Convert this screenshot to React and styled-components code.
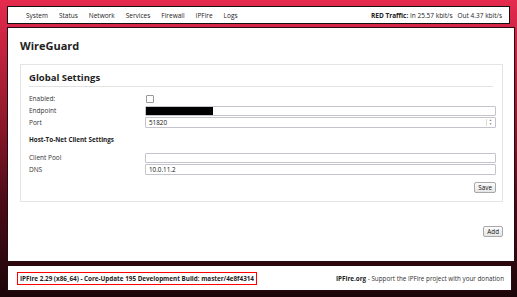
import styled, { createGlobalStyle } from 'styled-components';

const GlobalStyle = createGlobalStyle`
  html, body {
    margin: 0;
    padding: 0;
  }
  body {
    font-family: "Open Sans", "Liberation Sans", sans-serif;
    background: linear-gradient(180deg, #e52b4e 0%, #c92342 14%, #951a2d 38%, #4a0c17 68%, #1c0609 100%);
    min-height: 297px;
  }
`;

const Page = styled.div`
  box-sizing: border-box;
  height: 297px;
  padding: 6px 2px 6px 7px;
  display: flex;
  flex-direction: column;
  gap: 3px;
`;

const NavBar = styled.div`
  box-sizing: border-box;
  height: 18px;
  margin-right: 5px;
  background: #fff;
  border: 1px solid #111;
  display: flex;
  align-items: center;
  justify-content: space-between;
  padding: 0 7px 0 18px;
  font-size: 6.5px;
  color: #222;
`;

const NavLinks = styled.div`
  display: flex;
  gap: 11px;
`;

const Traffic = styled.div`
  display: flex;
  gap: 5px;
  b {
    font-weight: 700;
  }
`;

const Main = styled.div`
  box-sizing: border-box;
  flex: 1;
  background: #fff;
  border: 1px solid #2a0810;
  display: flex;
  flex-direction: column;
  padding: 0 11px 0 12px;
`;

const Heading = styled.h1`
  margin: 10px 0 0 0;
  font-size: 11px;
  line-height: 16px;
  font-weight: 700;
  color: #222;
`;

const Section = styled.div`
  box-sizing: border-box;
  margin-top: 10px;
  height: 138px;
  border: 1px solid #e4e4e4;
  padding: 0 6px 0 8px;
  display: flex;
  flex-direction: column;
`;

const SectionTitle = styled.h2`
  margin: 6px 0 0 0;
  font-size: 9.5px;
  line-height: 14px;
  font-weight: 700;
  color: #222;
  border-bottom: 1px solid #e2e2e2;
  padding-bottom: 1px;
  margin-right: 3px;
`;

const Row = styled.div`
  display: grid;
  grid-template-columns: 116px 1fr;
  align-items: center;
  height: 11px;
  margin-top: ${(p) => p.$top || 1}px;
  font-size: 6.5px;
  color: #333;
`;

const SubHeading = styled.div`
  margin-top: 6px;
  font-size: 6.3px;
  line-height: 12px;
  font-weight: 700;
  color: #222;
`;

const Checkbox = styled.span`
  width: 6px;
  height: 6px;
  border: 1px solid #999;
  border-radius: 1px;
  background: #fff;
  margin-left: 1px;
`;

const Input = styled.div`
  box-sizing: border-box;
  height: ${(p) => (p.$tall ? 11 : 10)}px;
  border: 1px solid #c4c4cc;
  border-radius: 1px;
  background: #fff;
  display: flex;
  align-items: center;
  font-size: 6.3px;
  color: #111;
  padding-left: 3px;
  position: relative;
`;

const Redacted = styled.span`
  width: 67px;
  height: 100%;
  margin-left: -3px;
  background: #000;
`;

const Spinner = styled.span`
  position: absolute;
  right: 1px;
  top: 1px;
  bottom: 1px;
  width: 7px;
  border-left: 1px solid #ddd;
  display: flex;
  flex-direction: column;
  align-items: center;
  justify-content: center;
  gap: 1px;
  font-size: 3px;
  line-height: 3px;
  color: #777;
`;

const ButtonRow = styled.div`
  display: flex;
  justify-content: flex-end;
  margin-top: ${(p) => p.$top}px;
`;

const Button = styled.button`
  box-sizing: border-box;
  height: 11px;
  padding: 0 3px;
  font-family: "Open Sans", "Liberation Sans", sans-serif;
  font-size: 6.3px;
  line-height: 9px;
  color: #111;
  background: linear-gradient(#fbfbfb, #e6e6e6);
  border: 1px solid #a8a8a8;
  border-radius: 2px;
`;

const Footer = styled.div`
  box-sizing: border-box;
  height: 26px;
  margin-right: 3px;
  background: #fff;
  border: 1px solid #2a0810;
  display: flex;
  align-items: center;
  justify-content: space-between;
  padding: 0 7px 0 9px;
  font-size: 6.3px;
  color: #333;
`;

const Version = styled.span`
  border: 1px solid #ff0000;
  padding: 1px 2px;
  font-weight: 700;
  color: #222;
`;

const Support = styled.span`
  b {
    color: #222;
  }
`;

const navItems = ['System', 'Status', 'Network', 'Services', 'Firewall', 'IPFire', 'Logs'];

export default function App() {
  return (
    <>
      <GlobalStyle />
      <Page>
        <NavBar>
          <NavLinks>
            {navItems.map((item) => (
              <span key={item}>{item}</span>
            ))}
          </NavLinks>
          <Traffic>
            <span>
              <b>RED Traffic:</b> In 25.57 kbit/s
            </span>
            <span>Out 4.37 kbit/s</span>
          </Traffic>
        </NavBar>

        <Main>
          <Heading>WireGuard</Heading>
          <Section>
            <SectionTitle>Global Settings</SectionTitle>
            <Row $top={6}>
              <span>Enabled:</span>
              <Checkbox />
            </Row>
            <Row>
              <span>Endpoint</span>
              <Input>
                <Redacted />
              </Input>
            </Row>
            <Row>
              <span>Port</span>
              <Input $tall>
                51820
                <Spinner>
                  <span>▲</span>
                  <span>▼</span>
                </Spinner>
              </Input>
            </Row>
            <SubHeading>Host-To-Net Client Settings</SubHeading>
            <Row $top={6}>
              <span>Client Pool</span>
              <Input />
            </Row>
            <Row>
              <span>DNS</span>
              <Input $tall>10.0.11.2</Input>
            </Row>
            <ButtonRow $top={7}>
              <Button>Save</Button>
            </ButtonRow>
          </Section>
          <ButtonRow $top={24}>
            <Button>Add</Button>
          </ButtonRow>
        </Main>

        <Footer>
          <Version>IPFire 2.29 (x86_64) - Core-Update 195 Development Build: master/4e8f4314</Version>
          <Support>
            <b>IPFire.org</b> - Support the IPFire project with your donation
          </Support>
        </Footer>
      </Page>
    </>
  );
}
